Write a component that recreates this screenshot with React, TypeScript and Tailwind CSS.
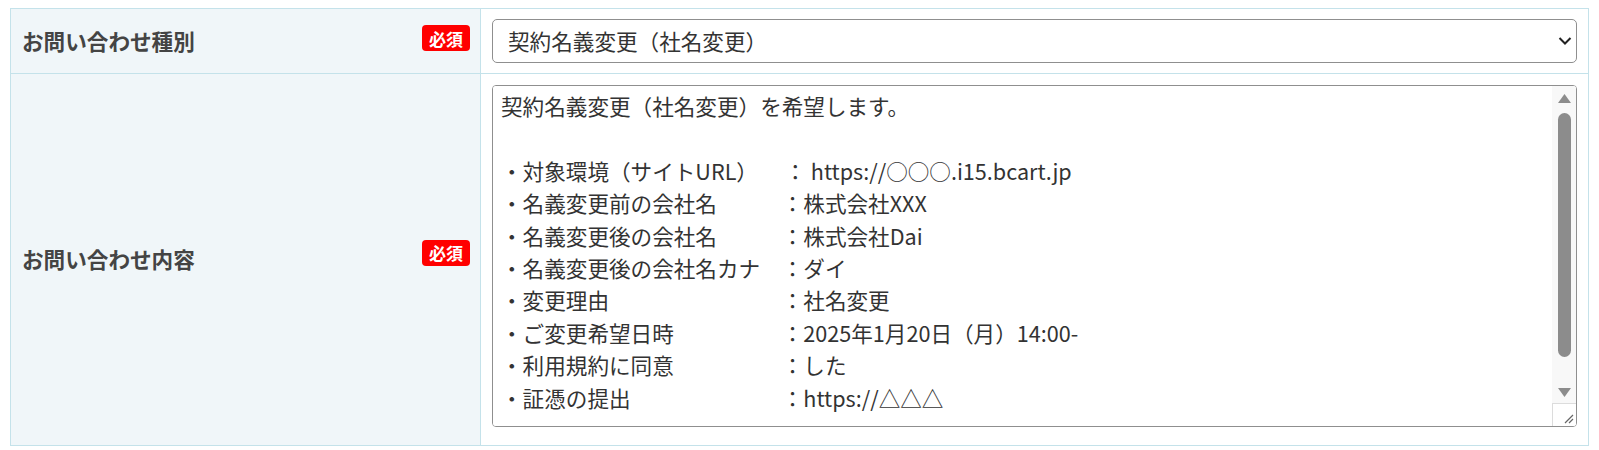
import React from "react";

const content = [
  "契約名義変更（社名変更）を希望します。",
  "",
  "・対象環境（サイトURL） 　： https://○○○.i15.bcart.jp",
  "・名義変更前の会社名　　　：株式会社XXX",
  "・名義変更後の会社名　　　：株式会社Dai",
  "・名義変更後の会社名カナ　：ダイ",
  "・変更理由　　　　　　　　：社名変更",
  "・ご変更希望日時　　　　　：2025年1月20日（月）14:00-",
  "・利用規約に同意　　　　　：した",
  "・証憑の提出　　　　　　　：https://△△△",
  "",
].join("\n");

function Badge() {
  return (
    <span className="inline-flex h-[26px] w-[48px] items-center justify-center rounded-[4px] bg-[#ff0000] text-[17px] font-bold leading-none text-white">
      必須
    </span>
  );
}

function Label({ text, badgeShift }: { text: string; badgeShift: string }) {
  return (
    <div className="flex items-center justify-between bg-[#f0f6f9] pl-[11px] pr-[10px]">
      <span className="text-[21.6px] font-bold text-[#444444]">{text}</span>
      <span className={badgeShift}>
        <Badge />
      </span>
    </div>
  );
}

function FakeScrollbar() {
  return (
    <div className="pointer-events-none absolute bottom-0 right-0 top-0 flex w-[24px] flex-col">
      <div className="flex flex-1 flex-col items-center bg-[#f8f8f8] pt-[7px]">
        <svg width="15" height="11" viewBox="0 0 15 11">
          <path d="M7.5 1 L14 10 L1 10 Z" fill="#8c8c8c" />
        </svg>
        <div className="mt-[9px] h-[244px] w-[13px] rounded-full bg-[#8c8c8c]" />
        <div className="flex-1" />
        <svg width="15" height="11" viewBox="0 0 15 11" className="mb-[5px]">
          <path d="M1 1 L14 1 L7.5 10 Z" fill="#8c8c8c" />
        </svg>
      </div>
      <div className="relative h-[23px] border-l border-t border-[#dcdcdc] bg-white">
        <svg width="12" height="12" viewBox="0 0 12 12" className="absolute bottom-[2px] right-[2px]">
          <path d="M11 3 L3 11 M11 7 L7 11" stroke="#666" strokeWidth="1.2" />
        </svg>
      </div>
    </div>
  );
}

export default function App() {
  return (
    <div
      className="bg-white pl-[10px] pr-[10px] pt-[8px]"
      style={{ fontFamily: '"Noto Sans CJK JP", "Noto Sans", sans-serif' }}
    >
      <div className="grid grid-cols-[469px_1fr] border border-[#c4e2ea]">
        <Label text="お問い合わせ種別" badgeShift="-translate-y-[3px]" />
        <div className="border-l border-[#c4e2ea] px-[11px] py-[10px]">
          <div className="relative">
            <select
              className="block h-[44px] w-full appearance-none rounded-[5px] border border-[#8f8f8f] bg-white pl-[15px] pr-[30px] text-[21.6px] text-[#333333] outline-none"
              defaultValue="a"
            >
              <option value="a">契約名義変更（社名変更）</option>
            </select>
            <svg
              className="pointer-events-none absolute right-[5px] top-1/2 -translate-y-1/2"
              width="14"
              height="9"
              viewBox="0 0 14 9"
            >
              <path d="M1.5 1.5 L7 7 L12.5 1.5" fill="none" stroke="#222" strokeWidth="2" />
            </svg>
          </div>
        </div>
        <div className="col-span-2 border-t border-[#c4e2ea]" />
        <Label text="お問い合わせ内容" badgeShift="-translate-y-[7px]" />
        <div className="border-l border-[#c4e2ea] px-[11px] pb-[18px] pt-[11px]">
          <div className="relative h-[342px] overflow-hidden rounded-[4px] border border-[#8f8f8f] bg-white">
            <textarea
              readOnly
              defaultValue={content}
              className="block h-full w-full resize-none overflow-hidden bg-white pl-[8px] pr-[30px] pt-[4px] text-[21.6px] leading-[1.5] text-[#333333] outline-none"
              style={{ fontFamily: '"Noto Sans CJK JP", sans-serif' }}
            />
            <FakeScrollbar />
          </div>
        </div>
      </div>
    </div>
  );
}
